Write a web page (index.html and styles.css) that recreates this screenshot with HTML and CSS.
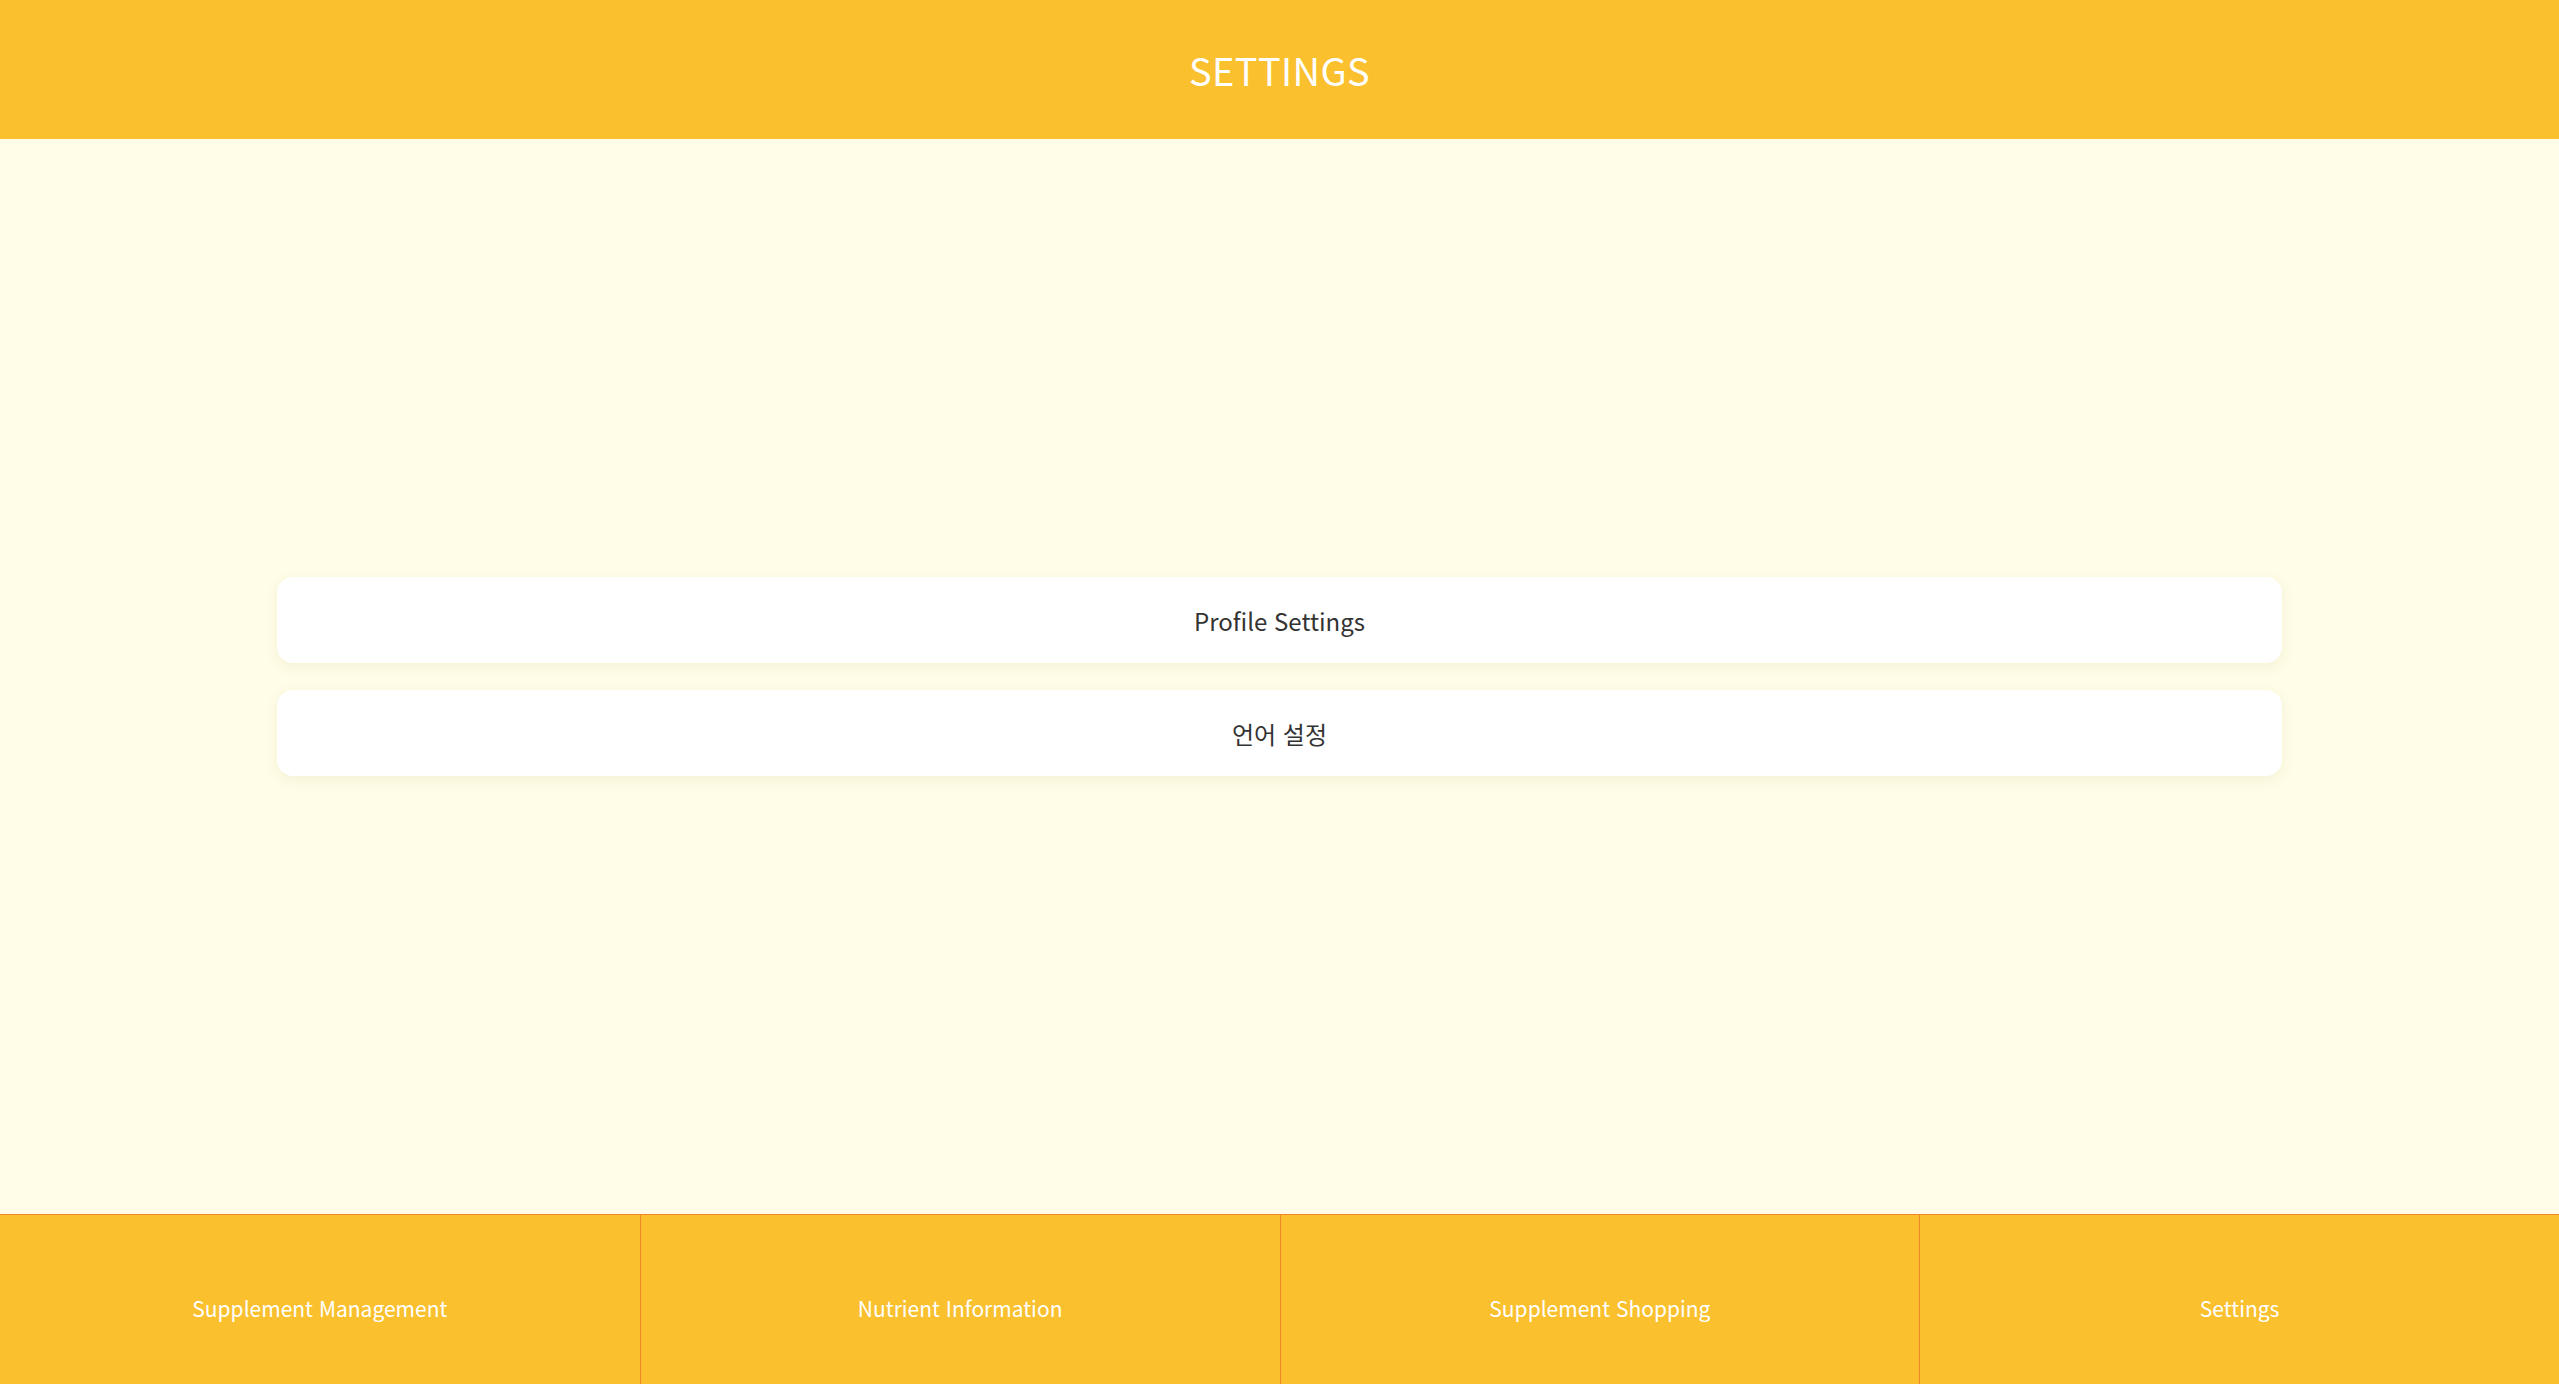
FILE: index.html
```html
<!DOCTYPE html>
<html lang="ko">
<head>
<meta charset="utf-8">
<title>Settings</title>
<link rel="stylesheet" href="styles.css">
</head>
<body>
<div class="app">
  <header class="topbar">
    <h1 class="title">SETTINGS</h1>
  </header>
  <main class="content">
    <div class="list">
      <button class="item">Profile Settings</button>
      <button class="item">언어 설정</button>
    </div>
  </main>
  <nav class="tabs">
    <a class="tab">Supplement Management</a>
    <a class="tab">Nutrient Information</a>
    <a class="tab">Supplement Shopping</a>
    <a class="tab">Settings</a>
  </nav>
</div>
</body>
</html>
```
FILE: styles.css
```css
html, body {
  margin: 0;
  padding: 0;
  height: 100%;
}
body {
  font-family: "Noto Sans CJK KR", "Noto Sans", sans-serif;
  background: #FFFDE7;
}
.app {
  display: flex;
  flex-direction: column;
  height: 100vh;
}
.topbar {
  height: 139px;
  flex: 0 0 139px;
  background: #FAC02E;
  display: flex;
  align-items: center;
  justify-content: center;
}
.title {
  margin: 0;
  color: #ffffff;
  font-weight: 400;
  font-size: 38px;
  letter-spacing: 0.4px;
}
.content {
  flex: 1;
  display: flex;
  align-items: center;
  justify-content: center;
}
.list {
  width: 2005px;
  display: flex;
  flex-direction: column;
  gap: 27px;
}
.item {
  height: 86px;
  border: none;
  background: #ffffff;
  border-radius: 16px;
  box-shadow: 0 4px 14px rgba(120, 100, 0, 0.08);
  font-family: inherit;
  font-size: 24px;
  color: #333333;
  cursor: pointer;
}
.tabs {
  flex: 0 0 170px;
  height: 170px;
  box-sizing: border-box;
  border-top: 1px solid #F2862A;
  background: #FAC02E;
  display: grid;
  grid-template-columns: repeat(4, 1fr);
}
.tab {
  display: flex;
  align-items: center;
  justify-content: center;
  padding-top: 17px;
  color: #ffffff;
  font-size: 21px;
}
.tab + .tab {
  border-left: 1px solid #F2862A;
}
```
